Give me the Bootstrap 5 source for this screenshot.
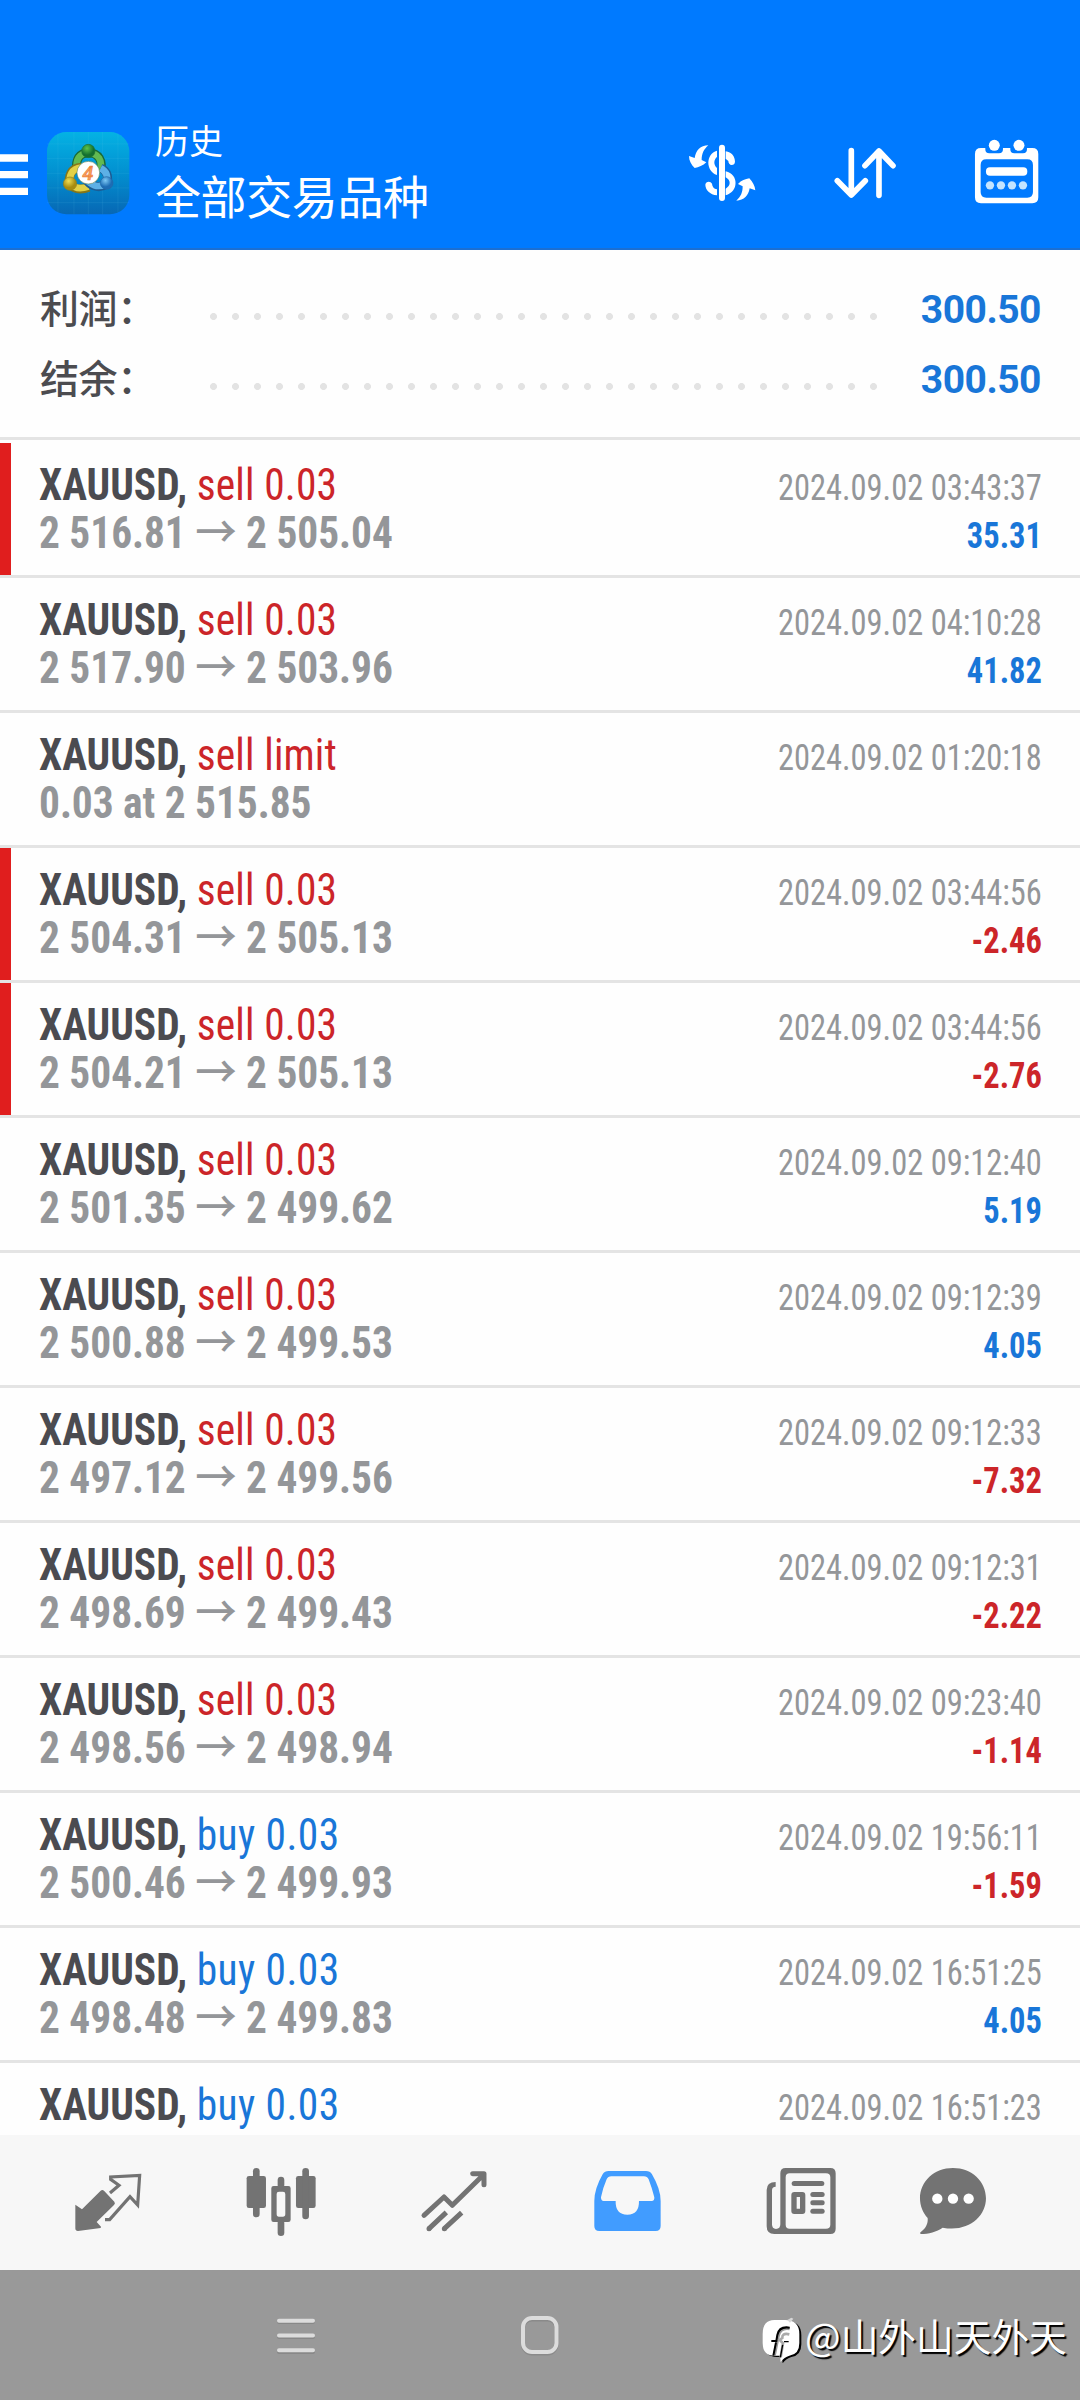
<!DOCTYPE html>
<html lang="zh-CN">
<head>
<meta charset="utf-8">
<title>历史</title>
<meta name="viewport" content="width=device-width, initial-scale=1">
<link href="https://cdn.jsdelivr.net/npm/bootstrap@5.3.0/dist/css/bootstrap.min.css" rel="stylesheet">
<style>
body{width:1080px;height:2400px;overflow:hidden;background:#fefefe;font-family:Roboto,"Noto Sans CJK SC",sans-serif}
svg{display:block;flex:none}
.topbar{height:250px;background:#007aff;border-bottom:2px solid #1c6fd2;color:#fff;font-family:"Noto Sans CJK SC",sans-serif}
.titles{padding-top:120px;white-space:nowrap}
.subt{font-size:34px;line-height:40px;font-weight:400}
.maint{font-size:46px;line-height:60px;font-weight:400;margin-top:4px;letter-spacing:-.4px}
.summary{height:190px;padding:21px 39px 0;border-bottom:3px solid #e4e4e4}
.sumline{height:70px;line-height:70px;font-size:39px}
.sumlabel{width:171px;padding-left:1px;letter-spacing:-.4px;font-family:"Noto Sans CJK SC",sans-serif;font-weight:500;color:#4c4c50}
.dots{width:682px;height:70px;align-self:flex-start;background:radial-gradient(circle at 3.5px 45.500px,#e3e3e3 3.1px,transparent 3.8px) 0 0/22px 70px}
.sumval{font-weight:700;color:#1976d8;letter-spacing:-.5px}
.deals{height:1695px;overflow:hidden;padding-top:3px}
.deal{height:132px;box-sizing:content-box;border-bottom:3px solid #e4e4e4;padding:0 38px 0 39px;font-stretch:75%;white-space:nowrap}
.deal.bar{box-shadow:inset 11px 0 #e01e1e}
.left{padding-top:18px;font-size:44px;line-height:48px;transform:scaleX(.941);transform-origin:0 0}
.right{padding-top:21px;font-size:36px;line-height:48px;transform:scaleX(.901);transform-origin:100% 0}
.sym{font-weight:700;color:#4b4b50}
.sell{color:#cc2529;letter-spacing:.15px}.buy{color:#1976d8;letter-spacing:.45px}
.right .sell,.right .buy{letter-spacing:0}
.price{font-weight:700;color:#949699;letter-spacing:-.05px}
.arr{font:500 44px/0 "Noto Sans CJK SC",sans-serif}
.time{color:#949699}
.tabs{height:135px;background:#f7f7f7;padding-left:22px}
.sysbar{height:130px;background:#999}
.wm{font:400 37.7px/60px "Noto Sans CJK SC",sans-serif;color:#fff;text-shadow:2px 2px 1px #000;white-space:nowrap;margin:35px 0 0 1px}
</style>
</head>
<body>
<header class="topbar d-flex align-items-start">
  <svg width="155" height="248" viewBox="0 0 155 248">
    <defs>
      <linearGradient id="bg" x1="0" y1="0" x2="0" y2="1"><stop offset="0" stop-color="#04b2e4"/><stop offset=".5" stop-color="#0290d0"/><stop offset="1" stop-color="#0767b4"/></linearGradient>
      <radialGradient id="gg" cx=".4" cy=".3"><stop offset="0" stop-color="#5cc34c"/><stop offset="1" stop-color="#14702f"/></radialGradient>
      <radialGradient id="gy" cx=".4" cy=".3"><stop offset="0" stop-color="#f0de52"/><stop offset="1" stop-color="#a88c10"/></radialGradient>
      <radialGradient id="gb" cx=".4" cy=".3"><stop offset="0" stop-color="#7cc8f4"/><stop offset="1" stop-color="#1d6cb4"/></radialGradient>
    </defs>
    <path d="M0 154.300h28v7.500H0zM0 171h28v7.300H0zM0 187.800h28v7.300H0z" fill="#fff"/>
    <g transform="translate(40 126) scale(.3333)">
      <rect x="21" y="18" width="247" height="247" rx="58" fill="url(#bg)"/>
      <g stroke="#6fd0f0" stroke-opacity=".22" stroke-width="1.500"><path d="M54 22v238M102 18v247M145 18v247M188 18v247M234 22v238M21 54h247M21 98h247M21 142h247M21 186h247M21 230h247"/></g>
      <path d="M110 136c-4-36 8-56 36-56s46 24 34 60" fill="none" stroke="#1a6a35" stroke-width="27"/>
      <path d="M110 134c-4-34 8-53 36-53s44 22 33 56" fill="none" stroke="#62ba52" stroke-width="20"/>
      <path d="M124 124c-32 2-40 28-34 50 14 18 36 18 56 10" fill="none" stroke="#85761a" stroke-width="27"/>
      <path d="M124 125c-31 2-38 28-33 48 14 17 34 16 54 9" fill="none" stroke="#e2d046" stroke-width="20"/>
      <path d="M182 126c22 10 24 30 18 48-26 18-52 2-64-16" fill="none" stroke="#1c5c94" stroke-width="27"/>
      <path d="M182 127c20 10 22 28 17 46-26 16-50 2-62-15" fill="none" stroke="#5cb0e6" stroke-width="20"/>
      <circle cx="145" cy="75" r="20" fill="url(#gg)" stroke="#1c7236" stroke-width="2"/>
      <circle cx="90" cy="173" r="20" fill="url(#gy)" stroke="#94821a" stroke-width="2"/>
      <circle cx="200" cy="171" r="19" fill="url(#gb)" stroke="#2268a4" stroke-width="2"/>
      <circle cx="145" cy="140" r="34" fill="#fff" stroke="#477038" stroke-width="1.500"/>
      <text x="144" y="161" text-anchor="middle" font-family="Roboto,sans-serif" font-size="59" font-weight="500" font-style="italic" fill="#f6a062" stroke="#ee8038" stroke-width="2">4</text>
    </g>
  </svg>
  <div class="titles">
    <div class="subt">历史</div>
    <div class="maint">全部交易品种</div>
  </div>
  <svg class="ms-auto" width="420" height="248" viewBox="660 0 420 248">
    <g transform="translate(660 110) scale(.3333)" fill="#fff">
      <path d="M186 113v151" stroke="#fff" stroke-width="18" stroke-linecap="round"/>
      <path d="M171 122c-34 10-35 60 0 73v-21c-11-10-10-25 0-33z"/>
      <path d="M197 124c18 2 28 16 28 31q-1 10-10 10-9-1-10-12l-8-7zM197 184c40 8 40 62 0 72v-20c16-9 16-25 0-34zM171 238c-10-2-14-8-15-17-4-9-19-8-20 3 0 15 14 30 35 32z"/>
      <path d="M145 106c-24 0-37 15-41 38l-17-6c0 14 7 26 17 36 12-3 25-6 35-17l-14-7c0-18 6-32 20-44z"/>
      <path d="M229 272c24-2 36-14 40-37l17 6c-1-14-8-25-18-36-12 2-24 6-34 17l14 7c0 18-5 31-19 43z"/>
      <g fill="none" stroke="#fff" stroke-width="17" stroke-linecap="round" stroke-linejoin="round"><path d="M574 122v132M532 212l42 43 42-43M657 256V124M615 167l42-44 42 44"/></g>
      <path fill-rule="evenodd" d="M963 114h13v4q0 12 12 12h29q12 0 12-12v-4h22v4q0 12 12 12h26q12 0 12-12v-4h16q18 0 18 18v130q0 18-18 18H963q-18 0-18-18V132q0-18 18-18zM979 148q-17 0-17 17v81q0 17 17 17h123q17 0 17-17v-81q0-17-17-17z"/>
      <circle cx="1003" cy="106" r="16.500"/><circle cx="1077" cy="106" r="16.500"/>
      <rect x="978" y="172" width="124" height="25" rx="12"/>
      <g fill="#c4e4ff"><circle cx="990" cy="226" r="12.500"/><circle cx="1023" cy="226" r="12.500"/><circle cx="1056" cy="226" r="12.500"/><circle cx="1089" cy="226" r="12.500"/></g>
    </g>
  </svg>
</header>

<section class="summary">
  <div class="sumline d-flex align-items-baseline"><span class="sumlabel">利润：</span><span class="dots"></span><span class="sumval ms-auto">300.50</span></div>
  <div class="sumline d-flex align-items-baseline"><span class="sumlabel">结余：</span><span class="dots"></span><span class="sumval ms-auto">300.50</span></div>
</section>

<main class="deals" id="deals"></main>

<nav class="tabs d-flex">
  <svg width="173" height="135" viewBox="22 2135 173 135"><g transform="translate(40 2150) scale(.3333)">
    <path d="M106 164l20 14 56-56q5-4 10 0l31 33q4 5-1 10l-52 51 13 14-1 4-68 9q-8 0-8-8z" fill="#737373"/>
    <path d="M210 129l27-23-25-18v-7l87-5-6 89-23-25-61 69h-14" fill="none" stroke="#737373" stroke-width="9.500"/></g></svg>
  <svg width="173" height="135" viewBox="195 2135 173 135"><g transform="translate(40 2150) scale(.3333)" fill="#737373">
    <rect x="620" y="78" width="58" height="96" rx="7"/><rect x="768" y="78" width="59" height="96" rx="7"/>
    <rect x="639" y="54" width="20" height="148" rx="10"/><rect x="787" y="54" width="20" height="154" rx="10"/>
    <rect x="713" y="80" width="20" height="35" rx="10"/><rect x="713" y="208" width="20" height="50" rx="10"/>
    <path fill-rule="evenodd" d="M701 108h44q7 0 7 7v94q0 7-7 7h-44q-7 0-7-7v-94q0-7 7-7zM717 125q-7 0-7 7v60q0 8 7 8h12q7 0 7-8v-60q0-7-7-7z"/></g></svg>
  <svg width="173" height="135" viewBox="368 2135 173 135"><g transform="translate(400 2150) scale(.3333)" fill="none" stroke="#737373" stroke-width="15" stroke-linecap="round" stroke-linejoin="round">
    <path d="M72 196l60-55 25 25 92-90M218 71h34v33"/><path d="M87 236l52-49M133 236l52-48" stroke-linecap="butt"/><path d="M87 236h.1M133 236h.1"/></g></svg>
  <svg width="173" height="135" viewBox="541 2135 173 135"><g transform="translate(400 2150) scale(.3333)">
    <path fill="#419cff" fill-rule="evenodd" d="M626 63h112q12 0 18 10 26 44 26 80v75q0 15-15 15H598q-15 0-15-15v-75q0-36 25-80 6-10 18-10zM634 79q-10 0-14 9-11 25-17 54 0 11 8 11h36q-1 41 35 41t35-41h38q9 0 8-11-7-28-17-54-4-9-14-9z"/></g></svg>
  <svg width="173" height="135" viewBox="714 2135 173 135"><g transform="translate(740 2150) scale(.3333)" fill="#737373">
    <path fill-rule="evenodd" d="M137 54h134q16 0 16 16v166q0 16-16 16H103q-23 0-23-23V120q0-24 27-24v14q-11 0-11 11v102q0 14 12 14 13 0 13-14V70q0-16 16-16zM149 70q-12 0-12 12v142q0 12 12 12h109q13 0 13-12V82q0-12-13-12z"/>
    <rect x="155" y="93" width="98" height="15" rx="7.500"/>
    <path fill-rule="evenodd" d="M163 126h24q9 0 9 9v48q0 9-9 9h-24q-9 0-9-9v-48q0-9 9-9zM170 141v35h10v-35z"/>
    <rect x="211" y="126" width="43" height="15" rx="7.500"/><rect x="211" y="151" width="43" height="15" rx="7.500"/><rect x="211" y="176" width="43" height="15" rx="7.500"/></g></svg>
  <svg width="132" height="135" viewBox="887 2135 132 135"><g transform="translate(740 2150) scale(.3333)">
    <path fill="#737373" d="M639 54c56 0 99 40 99 91 0 56-55 103-130 88-18 12-42 19-66 19 -3-3-1-5 3-8 12-9 20-24 18-40-14-15-23-36-23-59 0-51 43-91 99-91z"/>
    <g fill="#fff"><circle cx="592" cy="146" r="15.500"/><circle cx="639" cy="146" r="15.500"/><circle cx="686" cy="146" r="15.500"/></g></g></svg>
</nav>
<footer class="sysbar d-flex">
  <svg width="804" height="130" viewBox="0 2270 804 130">
    <g fill="none" stroke-width="4" stroke-linecap="round">
      <path d="M279 2322h34M279 2337h34M279 2352h34" stroke="#888"/>
      <path d="M279 2320.700h34M279 2335.500h34M279 2350.300h34" stroke="#dcdcdc"/>
      <rect x="523" y="2319.500" width="33.500" height="34" rx="9" stroke="#8a8a8a"/>
      <rect x="523" y="2318" width="33.500" height="34" rx="9" stroke="#dcdcdc"/>
    </g>
    <g transform="translate(750 2300) scale(.3333)">
      <path d="M75 60h32q43 0 43 42v27q0 34-30 38-15 4-26 19l-2-19H76q-36 0-36-38v-27q0-42 35-42z" fill="#000" transform="translate(4 4)"/>
      <path d="M73 60h32q43 0 43 42v27q0 34-30 38-15 4-26 19l-2-19H74q-36 0-36-38v-27q0-42 35-42z" fill="#fff"/>
      <path d="M112 60l12-7 6 3-10 12z" fill="#d8d8d8"/>
      <path d="M119 86c-22-4-31 7-34 22l-12 59" fill="none" stroke="#999" stroke-width="9"/>
      <path d="M119 83c-24-4-34 7-37 22l-3 18H64M78 127l-8 40" fill="none" stroke="#000" stroke-width="6"/>
      <path d="M118 103c-17-4-22 2-21 11l-8 6 10 10-7 42" fill="none" stroke="#aaa" stroke-width="8"/>
      <path d="M102 125h14M98 135l-7 37" stroke="#000" stroke-width="4"/>
    </g>
  </svg>
  <span class="wm">@山外山天外天</span>
</footer>

<script>
// [side, volume, price text, time, profit, flagged]
const deals = [
  ['sell','0.03','2 516.81 → 2 505.04','03:43:37','35.31',1],
  ['sell','0.03','2 517.90 → 2 503.96','04:10:28','41.82',0],
  ['sell','limit','0.03 at 2 515.85','01:20:18','',0],
  ['sell','0.03','2 504.31 → 2 505.13','03:44:56','-2.46',1],
  ['sell','0.03','2 504.21 → 2 505.13','03:44:56','-2.76',1],
  ['sell','0.03','2 501.35 → 2 499.62','09:12:40','5.19',0],
  ['sell','0.03','2 500.88 → 2 499.53','09:12:39','4.05',0],
  ['sell','0.03','2 497.12 → 2 499.56','09:12:33','-7.32',0],
  ['sell','0.03','2 498.69 → 2 499.43','09:12:31','-2.22',0],
  ['sell','0.03','2 498.56 → 2 498.94','09:23:40','-1.14',0],
  ['buy','0.03','2 500.46 → 2 499.93','19:56:11','-1.59',0],
  ['buy','0.03','2 498.48 → 2 499.83','16:51:25','4.05',0],
  ['buy','0.03','','16:51:23','',0]
];
document.getElementById('deals').innerHTML = deals.map(([side,vol,price,time,profit,flag]) =>
  `<div class="deal d-flex justify-content-between ${flag ? 'bar' : ''}">
    <div class="left"><div><span class="sym">XAUUSD,</span> <span class="${side}">${side} ${vol}</span></div>
      <div class="price">${price.replace('→','<span class="arr">→</span>')}</div></div>
    <div class="right text-end"><div class="time">2024.09.02 ${time}</div>
      <div class="fw-bold ${profit[0] === '-' ? 'sell' : 'buy'}">${profit}</div></div>
  </div>`).join('');
</script>
<script src="https://cdn.jsdelivr.net/npm/bootstrap@5.3.0/dist/js/bootstrap.bundle.min.js"></script>
</body>
</html>
